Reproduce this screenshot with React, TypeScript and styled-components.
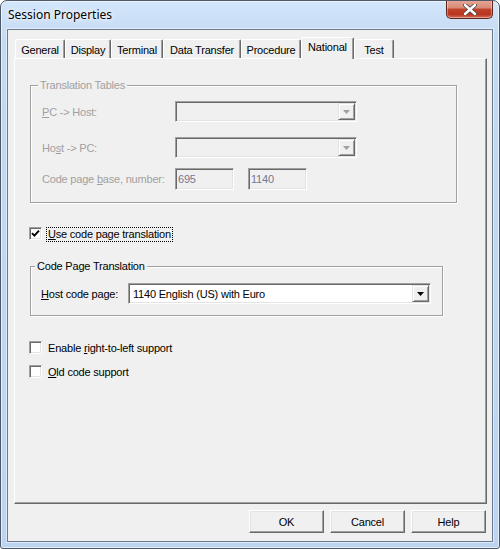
import React from 'react';
import styled, {createGlobalStyle} from 'styled-components';

const GlobalStyle = createGlobalStyle`
  html, body {
    margin: 0;
    padding: 0;
    background: #fff;
  }
  body {
    font-family: "Liberation Sans", Arial, sans-serif;
    font-size: 11px;
    letter-spacing: -0.2px;
    color: #000;
  }
`;

const DISABLED = '#a0a0a0';

const Window = styled.div`
  box-sizing: border-box;
  width: 500px;
  height: 549px;
  display: flex;
  flex-direction: column;
  border: 1px solid #4d5868;
  border-radius: 7px 7px 3px 3px;
  background: linear-gradient(to bottom, #d3e6fa 0%, #c3daf3 40px, #bcd4ef 100%);
  box-shadow: inset 0 0 0 1px rgba(255, 255, 255, .6);
  overflow: hidden;
`;

const TitleBar = styled.div`
  height: 28px;
  display: flex;
  justify-content: space-between;
  align-items: flex-start;
  padding: 0 6px 0 7px;
`;

const Title = styled.span`
  margin-top: 6px;
  font-family: "Noto Sans", "Open Sans", sans-serif;
  font-size: 12px;
  line-height: 16px;
  letter-spacing: 0;
  color: #000;
  text-shadow: 0 0 6px #fff, 0 0 3px #fff;
`;

const CloseButton = styled.div`
  box-sizing: border-box;
  width: 47px;
  height: 19px;
  margin-top: -1px;
  display: flex;
  align-items: center;
  justify-content: center;
  border: 1px solid #5e261d;
  border-top: none;
  border-radius: 0 0 5px 5px;
  background: linear-gradient(to bottom, #e9a898 0%, #d88a76 45%, #c2432b 50%, #b8351f 80%, #d4735b 100%);
  box-shadow: inset 0 0 0 1px rgba(255, 255, 255, .35);
`;

const Client = styled.div`
  flex: 1;
  margin: 0 6px 6px;
  border: 1px solid #6a7a90;
  box-shadow: 0 0 0 1px rgba(255, 255, 255, .5);
  background: #f0f0f0;
  display: flex;
  flex-direction: column;
  padding: 7px 5px 0 6px;
`;

const TabStrip = styled.div`
  position: relative;
  z-index: 1;
  height: 21px;
  display: flex;
  align-items: flex-end;
  padding-left: 1px;
`;

const Tab = styled.div<{$w: number; $active?: boolean}>`
  box-sizing: border-box;
  width: ${p => p.$w}px;
  height: ${p => (p.$active ? 22 : 19)}px;
  margin-bottom: ${p => (p.$active ? -1 : 0)}px;
  padding-top: ${p => (p.$active ? 2 : 3)}px;
  border-top: 1px solid #fff;
  border-left: 1px solid #fff;
  border-right: 1px solid #696969;
  border-radius: 2px 2px 0 0;
  box-shadow: inset -1px 0 0 #a0a0a0;
  background: #f0f0f0;
  text-align: center;
  line-height: 14px;
  white-space: nowrap;
`;

const Panel = styled.div`
  box-sizing: border-box;
  height: 446px;
  border-top: 1px solid #fff;
  border-left: 1px solid #fff;
  border-right: 1px solid #696969;
  border-bottom: 1px solid #696969;
  box-shadow: inset -1px -1px 0 #a0a0a0;
  display: flex;
  flex-direction: column;
  align-items: flex-start;
  padding: 25px 0 0 15px;
`;

const GroupBox = styled.div<{$w: number; $top?: number}>`
  position: relative;
  box-sizing: border-box;
  width: ${p => p.$w}px;
  margin-top: ${p => p.$top ?? 0}px;
  border: 1px solid #a0a0a0;
  box-shadow: 1px 1px 0 #fff, inset 1px 1px 0 #fff;
  display: flex;
  flex-direction: column;
`;

const Caption = styled.span<{$left: number; $disabled?: boolean}>`
  position: absolute;
  top: -7px;
  left: ${p => p.$left}px;
  padding: 0 2px;
  line-height: 13px;
  background: #f0f0f0;
  color: ${p => (p.$disabled ? DISABLED : '#000')};
`;

const GroupBody = styled.div<{$pad: string}>`
  padding: ${p => p.$pad};
  display: flex;
  flex-direction: column;
`;

const Row = styled.div<{$top?: number}>`
  display: flex;
  align-items: center;
  height: 21px;
  margin-top: ${p => p.$top ?? 0}px;
`;

const Label = styled.span<{$w: number; $disabled?: boolean}>`
  width: ${p => p.$w}px;
  flex-shrink: 0;
  color: ${p => (p.$disabled ? DISABLED : '#000')};
  white-space: nowrap;
`;

const Sunken = styled.div<{$w: number; $h?: number; $disabled?: boolean; $gap?: number}>`
  box-sizing: border-box;
  width: ${p => p.$w}px;
  height: ${p => p.$h ?? 21}px;
  margin-left: ${p => p.$gap ?? 0}px;
  display: flex;
  align-items: center;
  border-top: 1px solid #a0a0a0;
  border-left: 1px solid #a0a0a0;
  border-right: 1px solid #fff;
  border-bottom: 1px solid #fff;
  box-shadow: inset 1px 1px 0 #696969, inset -1px -1px 0 #e3e3e3;
  background: ${p => (p.$disabled ? '#f0f0f0' : '#fff')};
`;

const ComboText = styled.span`
  flex: 1;
  padding-left: 4px;
  white-space: nowrap;
  overflow: hidden;
`;

const FieldText = styled.span`
  padding-left: 2px;
  color: #727892;
`;

const DropButton = styled.div`
  box-sizing: border-box;
  width: 17px;
  height: 17px;
  margin-right: 1px;
  display: flex;
  align-items: center;
  justify-content: center;
  border-top: 1px solid #e3e3e3;
  border-left: 1px solid #e3e3e3;
  border-right: 1px solid #696969;
  border-bottom: 1px solid #696969;
  box-shadow: inset 1px 1px 0 #fff, inset -1px -1px 0 #a0a0a0;
  background: #f0f0f0;
`;

const CheckRow = styled.div<{$top: number}>`
  display: flex;
  align-items: flex-start;
  gap: 4px;
  margin: ${p => p.$top}px 0 0 -1px;
`;

const Box = styled.div`
  box-sizing: border-box;
  width: 13px;
  height: 13px;
  display: flex;
  align-items: center;
  justify-content: center;
  border-top: 1px solid #a0a0a0;
  border-left: 1px solid #a0a0a0;
  border-right: 1px solid #fff;
  border-bottom: 1px solid #fff;
  box-shadow: inset 1px 1px 0 #696969, inset -1px -1px 0 #e3e3e3;
  background: #fff;
`;

const CheckLabel = styled.span<{$focus?: boolean}>`
  padding: 0 1px;
  line-height: 13px;
  border: 1px dotted ${p => (p.$focus ? '#000' : 'transparent')};
  white-space: nowrap;
`;

const Accel = styled.u`
  text-decoration: underline;
  text-underline-offset: 1px;
`;

const ButtonRow = styled.div`
  display: flex;
  justify-content: flex-end;
  gap: 6px;
  margin-top: 6px;
  padding-right: 1px;
`;

const Button = styled.div`
  box-sizing: border-box;
  width: 75px;
  height: 23px;
  display: flex;
  align-items: center;
  justify-content: center;
  border-top: 1px solid #fff;
  border-left: 1px solid #fff;
  border-right: 1px solid #696969;
  border-bottom: 1px solid #696969;
  box-shadow: inset -1px -1px 0 #a0a0a0, inset 1px 1px 0 #e3e3e3;
  background: #f0f0f0;
`;

const Arrow = ({color}: {color: string}) => (
  <svg width="7" height="4" viewBox="0 0 7 4">
    <polygon points="0,0 7,0 3.5,4" fill={color}/>
  </svg>
);

const Combo = ({w, text, disabled}: {w: number; text?: string; disabled?: boolean}) => (
  <Sunken $w={w} $disabled={disabled}>
    <ComboText>{text}</ComboText>
    <DropButton><Arrow color={disabled ? DISABLED : '#000'}/></DropButton>
  </Sunken>
);

const Check = ({checked, focus, children, top}: {checked?: boolean; focus?: boolean; children: React.ReactNode; top: number}) => (
  <CheckRow $top={top}>
    <Box>
      {checked && (
        <svg width="9" height="9" viewBox="0 0 9 9">
          <path d="M1 4.2 L3.4 6.6 L8 1.6" fill="none" stroke="#000" strokeWidth="1.9"/>
        </svg>
      )}
    </Box>
    <CheckLabel $focus={focus}>{children}</CheckLabel>
  </CheckRow>
);

const tabs = [
  {name: 'General', w: 50},
  {name: 'Display', w: 46},
  {name: 'Terminal', w: 52},
  {name: 'Data Transfer', w: 78},
  {name: 'Procedure', w: 60},
  {name: 'National', w: 53, active: true},
  {name: 'Test', w: 40},
];

export default function App() {
  return (
    <>
      <GlobalStyle/>
      <Window>
        <TitleBar>
          <Title>Session Properties</Title>
          <CloseButton>
            <svg width="14" height="11" viewBox="0 0 14 11">
              <path d="M2 1 L12 10 M12 1 L2 10" stroke="#4a4a4a" strokeWidth="4.2" strokeLinecap="round"/>
              <path d="M2 1 L12 10 M12 1 L2 10" stroke="#fff" strokeWidth="2.4" strokeLinecap="round"/>
            </svg>
          </CloseButton>
        </TitleBar>
        <Client>
          <TabStrip>
            {tabs.map(t => (
              <Tab key={t.name} $w={t.w} $active={t.active}>{t.name}</Tab>
            ))}
          </TabStrip>
          <Panel>
            <GroupBox $w={427} $top={1}>
              <Caption $left={7} $disabled>Translation Tables</Caption>
              <GroupBody $pad="15px 0 13px 11px">
                <Row>
                  <Label $w={133} $disabled><Accel>P</Accel>C -&gt; Host:</Label>
                  <Combo w={182} disabled/>
                </Row>
                <Row $top={15}>
                  <Label $w={133} $disabled>Ho<Accel>s</Accel>t -&gt; PC:</Label>
                  <Combo w={182} disabled/>
                </Row>
                <Row $top={10}>
                  <Label $w={133} $disabled>Code page <Accel>b</Accel>ase, number:</Label>
                  <Sunken $w={59} $h={22} $disabled><FieldText>695</FieldText></Sunken>
                  <Sunken $w={59} $h={22} $disabled $gap={14}><FieldText>1140</FieldText></Sunken>
                </Row>
              </GroupBody>
            </GroupBox>

            <Check checked focus top={24}><Accel>U</Accel>se code page translation</Check>

            <GroupBox $w={413} $top={24}>
              <Caption $left={4}>Code Page Translation</Caption>
              <GroupBody $pad="16px 0 11px 10px">
                <Row>
                  <Label $w={87}><Accel>H</Accel>ost code page:</Label>
                  <Combo w={303} text="1140 English (US) with Euro"/>
                </Row>
              </GroupBody>
            </GroupBox>

            <Check top={25}>Enable <Accel>r</Accel>ight-to-left support</Check>
            <Check top={9}><Accel>O</Accel>ld code support</Check>
          </Panel>
          <ButtonRow>
            <Button>OK</Button>
            <Button>Cancel</Button>
            <Button>Help</Button>
          </ButtonRow>
        </Client>
      </Window>
    </>
  );
}
